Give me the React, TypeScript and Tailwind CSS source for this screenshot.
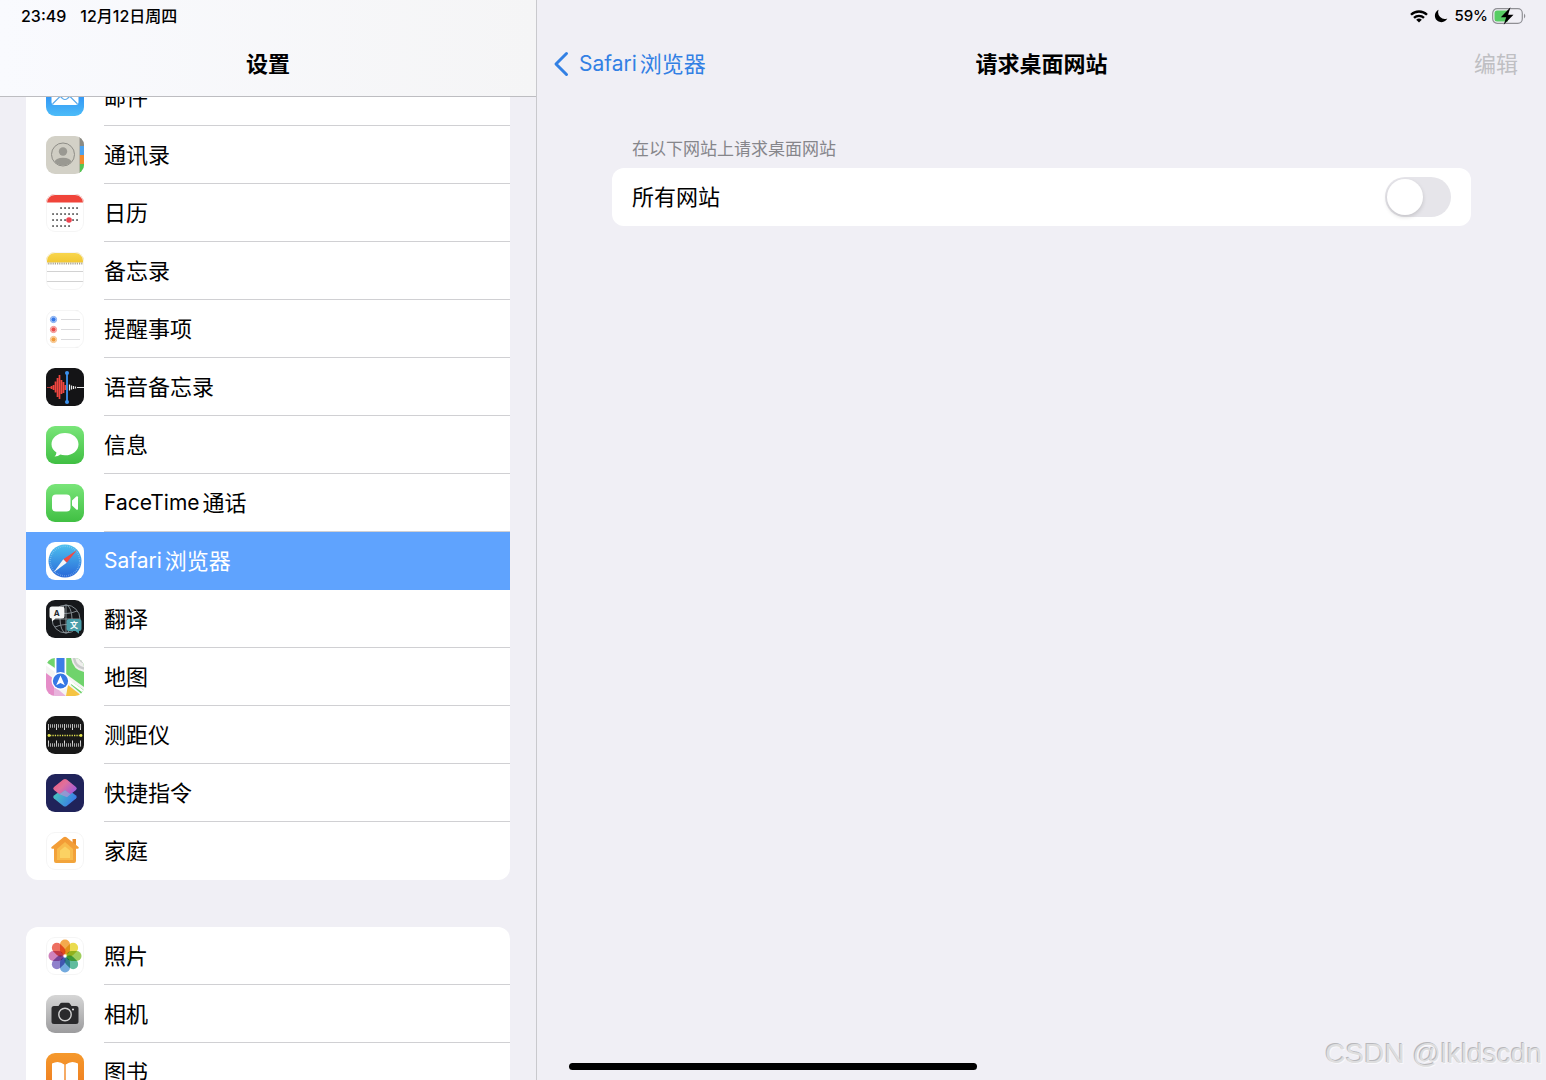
import React, { useState } from "react";

const TILE = "M9 0h20a9 9 0 0 1 9 9v20a9 9 0 0 1-9 9H9a9 9 0 0 1-9-9V9a9 9 0 0 1 9-9z";

function Tile({ id, fill, outline, children }: { id: string; fill: string; outline?: boolean; children?: React.ReactNode }) {
  return (
    <svg viewBox="0 0 38 38" className="size-[38px] shrink-0" aria-hidden="true">
      <defs>
        <clipPath id={`${id}-clip`}>
          <path d={TILE} />
        </clipPath>
      </defs>
      <g clipPath={`url(#${id}-clip)`}>
        <rect width="38" height="38" fill={fill} />
        {children}
      </g>
      {outline && <rect x="0.5" y="0.5" width="37" height="37" rx="8.5" fill="none" stroke="#f5f5f5" />}
    </svg>
  );
}

function Gradient({ id, from, to }: { id: string; from: string; to: string }) {
  return (
    <linearGradient id={id} x1="0" y1="0" x2="0" y2="1">
      <stop offset="0" stopColor={from} />
      <stop offset="1" stopColor={to} />
    </linearGradient>
  );
}

const MailIcon = () => (
  <Tile id="mail" fill="url(#mail-g)">
    <Gradient id="mail-g" from="#1d74f2" to="#4cbcf8" />
    <rect x="5.5" y="9" width="27" height="18" rx="3" fill="#fff" />
    <path d="M6.500 26l9-9M31.500 26l-9-9M6 10l10.500 10.500q2.500 2 5 0L32 10" fill="none" stroke="#5aa9ea" strokeWidth="1.100" />
  </Tile>
);

const ContactsIcon = () => (
  <Tile id="contacts" fill="#d3d1c7">
    <rect x="33.500" width="5" height="10" fill="#8b8a83" />
    <rect x="33.500" y="10" width="5" height="9" fill="#4da3ef" />
    <rect x="33.500" y="19" width="5" height="9" fill="#f28a2e" />
    <rect x="33.500" y="28" width="5" height="10" fill="#55c653" />
    <path d="M33.500 0v38" stroke="#b5b3aa" strokeWidth="0.800" />
    <clipPath id="contacts-face">
      <circle cx="17" cy="18.500" r="11" />
    </clipPath>
    <circle cx="17" cy="18.500" r="11.500" fill="#cfcdc3" stroke="#8e8d87" strokeWidth="1" />
    <g clipPath="url(#contacts-face)" fill="#9a9992">
      <circle cx="17" cy="15.500" r="4.200" />
      <ellipse cx="17" cy="26.500" rx="8.500" ry="4.800" />
    </g>
  </Tile>
);

const calendarDots: [number, number][] = [];
[14, 20, 26, 32].forEach((y, row) => {
  for (let col = 0; col < 7; col++) {
    if (row === 0 && col < 2) continue;
    if (row === 3 && col > 4) continue;
    calendarDots.push([7 + col * 4, y]);
  }
});

const CalendarIcon = () => (
  <Tile id="calendar" fill="#fff" outline>
    {calendarDots.map(([x, y]) => (
      <rect key={`${x}-${y}`} x={x - 0.7} y={y - 0.7} width="1.500" height="1.500" fill="#222" />
    ))}
    <circle cx="23" cy="26" r="2.800" fill="#ee4450" />
    <rect width="38" height="8.500" fill="#f0443a" />
  </Tile>
);

const NotesIcon = () => (
  <Tile id="notes" fill="#fff" outline>
    <Gradient id="notes-g" from="#f9d750" to="#f2c832" />
    <rect width="38" height="10.500" fill="url(#notes-g)" />
    <path d="M0 11.500h38" stroke="#a9a493" strokeWidth="1.800" strokeDasharray="1.200 1" />
    <path d="M0 19.500h38M0 29.500h38" stroke="#d2d2d2" strokeWidth="1" />
  </Tile>
);

const RemindersIcon = () => (
  <Tile id="reminders" fill="#fff" outline>
    <path d="M4 .5h30M15 9.500h19M15 19.500h19M15 29.500h19M4 37.500h30" stroke="#dadadc" strokeWidth="1" />
    {[["#3478e8", 9.5], ["#ea4b48", 19.5], ["#f09a37", 29.5]].map(([color, y]) => (
      <g key={color}>
        <circle cx="7.500" cy={y} r="3.100" fill="#fff" stroke={color as string} strokeWidth="1" opacity="0.700" />
        <circle cx="7.500" cy={y} r="2.200" fill={color as string} />
      </g>
    ))}
  </Tile>
);

const VoiceMemosIcon = () => (
  <Tile id="voice" fill="#141416">
    <path d="M1 19.500h4" stroke="#a83535" strokeWidth="1" />
    <path d="M5.500 18v3M7.500 17v5M9.500 13.500v11M11.500 10v19M13.500 7v24M15.500 12v14M17.500 14v11M19.500 17v5" stroke="#f04640" strokeWidth="1.700" />
    <path d="M23.500 16.500v6M25.500 17.500v4M27.500 18v3M29.500 18.500v2M31 19.500h7" stroke="#e9e9e9" strokeWidth="1.200" />
    <path d="M21 5v28" stroke="#3b93f0" strokeWidth="1.800" />
    <circle cx="21" cy="5" r="2" fill="#3b93f0" />
    <circle cx="21" cy="34" r="2" fill="#3b93f0" />
  </Tile>
);

const MessagesIcon = () => (
  <Tile id="messages" fill="url(#messages-g)">
    <Gradient id="messages-g" from="#79e579" to="#40bf43" />
    <path d="M19 7c7.700 0 13.500 4.900 13.500 11.200S26.700 29.300 19 29.300c-1.700 0-3.300-.2-4.700-.7-1.500 1.300-3.800 2.100-5.800 2 1.200-1.100 1.900-2.700 1.900-4.100-3-2-4.900-5-4.900-8.300C5.500 11.900 11.300 7 19 7z" fill="#fff" />
  </Tile>
);

const FaceTimeIcon = () => (
  <Tile id="facetime" fill="url(#facetime-g)">
    <Gradient id="facetime-g" from="#79e579" to="#40bf43" />
    <rect x="6" y="10.500" width="18.500" height="17" rx="4" fill="#fff" />
    <path d="M26 16.500l4.300-4c.8-.7 1.700-.3 1.700.7v11.600c0 1-.9 1.400-1.700.7l-4.300-4z" fill="#fff" />
  </Tile>
);

const SafariIcon = () => (
  <Tile id="safari" fill="#fff">
    <Gradient id="safari-g" from="#4cc0ee" to="#2a68d9" />
    <circle cx="19" cy="19" r="16.500" fill="url(#safari-g)" />
    <circle cx="19" cy="19" r="14.800" fill="none" stroke="#b8defa" strokeWidth="1.600" strokeDasharray=".6 1.340" opacity=".6" />
    <path d="M31 8L17.300 17.300l3.400 3.400z" fill="#f04a43" />
    <path d="M7.500 30.500L17.300 17.300l3.400 3.400z" fill="#f5f6f8" />
  </Tile>
);

const TranslateIcon = () => (
  <Tile id="translate" fill="#16181b">
    <g fill="none" stroke="#8d969c" strokeWidth="0.900">
      <circle cx="20" cy="19" r="14" />
      <ellipse cx="20" cy="19" rx="6" ry="14" />
      <path d="M20 5v28M6 19h28M9 11q11 5 22 0M9 27q11-5 22 0" />
    </g>
    <path d="M6 6.500h10a2.500 2.500 0 0 1 2.500 2.500v7a2.500 2.500 0 0 1-2.500 2.500h-6.500L6 21.500v-3A2.500 2.500 0 0 1 3.500 16V9A2.500 2.500 0 0 1 6 6.500z" fill="#f5f6f6" />
    <path d="M23 19h10a2.500 2.500 0 0 1 2.500 2.500v7A2.500 2.500 0 0 1 33 31v2.800L29.500 31H23a2.500 2.500 0 0 1-2.500-2.500v-7A2.500 2.500 0 0 1 23 19z" fill="#4a9eaa" />
    <text x="10.800" y="15.500" fontSize="8" fontWeight="700" textAnchor="middle" fill="#24282c">A</text>
    <text x="28" y="28.200" fontSize="8" fontWeight="700" textAnchor="middle" fill="#fff">文</text>
  </Tile>
);

const MapsIcon = () => (
  <Tile id="maps" fill="#f5f5f3">
    <path d="M20 0h18v29L20 16z" fill="#6fd36c" />
    <path d="M25 0q2 12 13 14V0z" fill="#efefed" />
    <path d="M28 0q1.500 9 10 10.500" fill="none" stroke="#c9cbcb" strokeWidth="2.500" />
    <path d="M34 0q.5 3.500 4 4.500" fill="none" stroke="#c9cbcb" strokeWidth="2" />
    <path d="M0 0h9v10L0 4z" fill="#6fd36c" />
    <path d="M0 15l8 6v17H0z" fill="#e58dc8" />
    <path d="M8 38V28l12 10z" fill="#e8b3dc" />
    <path d="M22 27l14 11H20z" fill="#f5c443" />
    <path d="M26 24l12 8v6L25 27z" fill="#6fd36c" />
    <path d="M0 6l38 28" stroke="#fff" strokeWidth="2.500" />
    <path d="M9.500 0v16M19.500 0v16" stroke="#fff" strokeWidth="1.500" />
    <rect x="10.500" width="8" height="16" fill="#3c7de8" />
    <circle cx="14.500" cy="23" r="9" fill="#fff" />
    <circle cx="14.500" cy="23" r="7.600" fill="#3578e5" />
    <path d="M14.500 17.500l4.300 9.700-4.300-2.200-4.300 2.200z" fill="#fff" />
  </Tile>
);

const MeasureIcon = () => (
  <Tile id="measure" fill="#181818">
    <path d="M2.500 8v6M10.500 8v6M18.500 8v6M26.500 8v6M34.500 8v6M2.500 24.500v5.500M10.500 24.500v5.500M18.500 24.500v5.500M26.500 24.500v5.500M34.500 24.500v5.500" stroke="#d8d8d8" strokeWidth="1" />
    <path d="M2 10h34" stroke="#bdbdbd" strokeWidth="3.500" strokeDasharray=".9 1.110" />
    <path d="M2 29h34" stroke="#bdbdbd" strokeWidth="3.500" strokeDasharray=".9 1.110" />
    <path d="M4 19.500h30" stroke="#dede4e" strokeWidth="1.300" strokeDasharray="1.300 1.100" />
    <circle cx="3" cy="19.500" r="1.400" fill="#e6e650" />
    <circle cx="35" cy="19.500" r="1.400" fill="#e6e650" />
  </Tile>
);

const ShortcutsIcon = () => (
  <Tile id="shortcuts" fill="#20235a">
    <linearGradient id="sc-a" x1="0" y1="0" x2="1" y2="0.600">
      <stop offset="0" stopColor="#ee5874" />
      <stop offset="0.500" stopColor="#e0709c" />
      <stop offset="1" stopColor="#a65bd4" />
    </linearGradient>
    <linearGradient id="sc-b" x1="0" y1="0" x2="1" y2="0.500">
      <stop offset="0" stopColor="#4bd3b4" />
      <stop offset="1" stopColor="#397be9" />
    </linearGradient>
    <path d="M17.300 14.500q1.700-1 3.400 0l9.300 7q1.700 1.500 0 3L20.700 32q-1.700 1-3.400 0L8 24.500q-1.700-1.500 0-3z" fill="url(#sc-b)" />
    <path d="M17.300 5.500q1.700-1 3.400 0l9.300 7.500q1.700 1.500 0 3l-5.500 4.200-5.500-4-5.500 4L8 16q-1.700-1.500 0-3z" fill="url(#sc-a)" />
    <path d="M13.500 20.200l5.500-4 5.500 4-3.500 3z" fill="#b591d2" opacity=".7" />
  </Tile>
);

const HomeIcon = () => (
  <Tile id="home" fill="#fff" outline>
    <Gradient id="home-g" from="#f39a35" to="#f2a53c" />
    <path d="M26.500 7H30v9h-3.500z" fill="#e98d2c" />
    <path d="M17.500 5.200q1.500-1.100 3 0L32.500 15q1 1.300-.5 1.700H30V29q0 2-2 2H10q-2 0-2-2V16.700H6q-1.500-.4-.5-1.700z" fill="url(#home-g)" />
    <path d="M19 10l8 7v11H11V17z" fill="#f8bb4c" />
    <path d="M19 14.500l5 4V26H14v-7.500z" fill="#fbd263" />
  </Tile>
);

const petals = ["#f39a2d", "#e7d52f", "#8dc63f", "#45b08c", "#5a9bd8", "#7c6bc2", "#c76bb0", "#ea5545"];

const PhotosIcon = () => (
  <Tile id="photos" fill="#fff" outline>
    {petals.map((color, i) => (
      <rect key={color} x="14" y="2.500" width="10" height="15" rx="5" fill={color} opacity="0.850" transform={`rotate(${i * 45} 19 19)`} className="mix-blend-multiply" />
    ))}
  </Tile>
);

const CameraIcon = () => (
  <Tile id="camera" fill="url(#camera-g)">
    <Gradient id="camera-g" from="#d6d6d6" to="#9c9c9e" />
    <path d="M8 11h4.500l1.700-2.500q.6-.8 1.600-.8h6.400q1 0 1.600.8l1.700 2.500H30q2.500 0 2.500 2.500v13Q32.500 29 30 29H8q-2.500 0-2.500-2.500v-13Q5.500 11 8 11z" fill="#2a2a2c" />
    <circle cx="19" cy="19.500" r="6.200" fill="none" stroke="#d0d0d0" strokeWidth="1.400" />
    <circle cx="27" cy="14.500" r="1" fill="#e8e8e8" />
  </Tile>
);

const BooksIcon = () => (
  <Tile id="books" fill="url(#books-g)">
    <Gradient id="books-g" from="#f5992c" to="#ee7a1f" />
    <path d="M18.300 11.500Q12.500 7 6 10.500V29q6.500-3 12.300 1zM19.700 11.500Q25.500 7 32 10.500V29q-6.500-3-12.300 1z" fill="#fff" />
  </Tile>
);

type Item = { label: string; Icon: () => React.ReactElement };

const groups: Item[][] = [
  [
    { label: "邮件", Icon: MailIcon },
    { label: "通讯录", Icon: ContactsIcon },
    { label: "日历", Icon: CalendarIcon },
    { label: "备忘录", Icon: NotesIcon },
    { label: "提醒事项", Icon: RemindersIcon },
    { label: "语音备忘录", Icon: VoiceMemosIcon },
    { label: "信息", Icon: MessagesIcon },
    { label: "FaceTime 通话", Icon: FaceTimeIcon },
    { label: "Safari 浏览器", Icon: SafariIcon },
    { label: "翻译", Icon: TranslateIcon },
    { label: "地图", Icon: MapsIcon },
    { label: "测距仪", Icon: MeasureIcon },
    { label: "快捷指令", Icon: ShortcutsIcon },
    { label: "家庭", Icon: HomeIcon },
  ],
  [
    { label: "照片", Icon: PhotosIcon },
    { label: "相机", Icon: CameraIcon },
    { label: "图书", Icon: BooksIcon },
  ],
];

/* Latin and Chinese runs sit side by side with a thin gap between them. */
function Label({ text }: { text: string }) {
  const [latin, han] = text.split(" ");
  return han ? (
    <span className="flex items-center gap-[3px]">
      <span className="text-[21px]">{latin}</span>
      <span>{han}</span>
    </span>
  ) : (
    <span>{text}</span>
  );
}

function SettingsRow({ item, selected, last, onSelect }: { item: Item; selected: boolean; last: boolean; onSelect: () => void }) {
  const { Icon, label } = item;
  return (
    <li>
      <button
        type="button"
        onClick={onSelect}
        aria-current={selected ? "page" : undefined}
        className={`flex h-[58px] w-full items-center gap-5 pl-5 text-left ${selected ? "bg-[#5fa3fe] text-white" : "text-black"}`}
      >
        <Icon />
        <span className={`flex h-full flex-1 items-center border-b ${selected || last ? "border-transparent" : "border-[#d0d0d3]"}`}>
          <Label text={label} />
        </span>
      </button>
    </li>
  );
}

function StatusIcons() {
  return (
    <div className="flex items-center gap-1.5">
      <svg viewBox="0 0 18 13" className="h-[13px] w-[18px]" aria-label="Wi-Fi">
        <g fill="none" stroke="#000" strokeWidth="2.300">
          <path d="M1 4.800a11.300 11.300 0 0 1 16 0" />
          <path d="M4 7.900a7 7 0 0 1 10 0" />
        </g>
        <path d="M9 12.600L6.200 9.800a4 4 0 0 1 5.600 0z" />
      </svg>
      <svg viewBox="0 0 14 14" className="h-[14px] w-[14px]" aria-label="勿扰模式">
        <path d="M4.600.8A6.500 6.500 0 1 0 13.300 9.400 6.700 6.700 0 0 1 4.600.8z" />
      </svg>
      <span className="-mr-0.5">59%</span>
      <svg viewBox="0 0 35 18" className="h-[18px] w-[35px]" aria-label="正在充电">
        <rect x="0.700" y="1.700" width="29.600" height="14.600" rx="4.500" fill="none" stroke="#8f8f94" strokeWidth="1.200" />
        <path d="M32 6.500q2.600 2.500 0 5z" fill="#8f8f94" />
        <path d="M5 3.500h11v11H5A2.500 2.500 0 0 1 2.500 12V6A2.500 2.500 0 0 1 5 3.500z" fill="#57cd63" />
        <path d="M18.500.3L8.800 10.200h5.400L11.700 17.700l9.800-9.900h-5.400z" fill="#000" />
      </svg>
    </div>
  );
}

export default function App() {
  const [selected, setSelected] = useState("Safari 浏览器");
  const [allSites, setAllSites] = useState(false);

  return (
    <div className="relative flex h-screen overflow-hidden bg-[#f0eff5] font-['Inter','Noto_Sans_CJK_SC',sans-serif] text-[22px] leading-8 text-black">
      <aside className="flex w-[537px] shrink-0 flex-col border-r border-[#c9c9cd]">
        <header className="z-10 border-b border-[#bdbdc1] bg-linear-to-r from-[#f9fafe] to-[#f5f5f6] pb-4">
          <div className="flex h-8 items-center gap-3.5 pl-[21px] text-base font-medium">
            <time>23:49</time>
            <span>12月12日周四</span>
          </div>
          <h1 className="mt-4 text-center font-bold">设置</h1>
        </header>
        <nav aria-label="设置" className="-mt-[29px] flex min-h-0 flex-1 flex-col gap-[47px] overflow-hidden px-[26px]">
          {groups.map((group, index) => (
            <ul key={index} className="shrink-0 overflow-hidden rounded-xl bg-white">
              {group.map((item, i) => (
                <SettingsRow
                  key={item.label}
                  item={item}
                  selected={item.label === selected}
                  last={i === group.length - 1}
                  onSelect={() => setSelected(item.label)}
                />
              ))}
            </ul>
          ))}
        </nav>
      </aside>

      <main className="flex min-w-0 flex-1 flex-col">
        <div className="flex h-8 items-center justify-end pr-[19px] text-[15px] font-medium">
          <StatusIcons />
        </div>
        <header className="mt-4 grid grid-cols-3 items-center px-4">
          <button type="button" className="flex items-center gap-2.5 text-[#3280e4]">
            <svg viewBox="0 0 16 26" className="h-[26px] w-4" fill="none" stroke="currentColor" strokeWidth="3" strokeLinecap="round" strokeLinejoin="round" aria-hidden="true">
              <path d="M13.500 2.500L3 13l10.500 10.500" />
            </svg>
            <Label text="Safari 浏览器" />
          </button>
          <h2 className="text-center font-bold">请求桌面网站</h2>
          <button type="button" disabled className="mr-3 justify-self-end text-[#bfbfc3]">编辑</button>
        </header>
        <section className="mt-14 px-[75px]">
          <h3 className="px-5 pt-px text-[17px] leading-6 text-[#86868b]">在以下网站上请求桌面网站</h3>
          <div className="mt-[7px] flex h-[58px] items-center justify-between rounded-xl bg-white px-5">
            <label htmlFor="all-sites">所有网站</label>
            <input
              id="all-sites"
              type="checkbox"
              role="switch"
              checked={allSites}
              onChange={(e) => setAllSites(e.target.checked)}
              className="flex h-10 w-[66px] appearance-none items-center rounded-full bg-[#e6e5ea] px-0.5 before:size-9 before:rounded-full before:bg-white before:shadow-[0_2px_4px_rgba(0,0,0,0.15)] checked:justify-end checked:bg-[#34c759]"
            />
          </div>
        </section>
      </main>

      <div className="absolute bottom-[10px] left-[569px] h-[7px] w-[408px] rounded-full bg-black" />
      <p className="absolute right-1 bottom-2.5 font-['Liberation_Sans',sans-serif] text-[28px] text-[#dededf] [text-shadow:-1px_-1px_0_#b8b8bc,1px_1px_0_#f8f8fb]">
        CSDN @lkldscdn
      </p>
    </div>
  );
}
